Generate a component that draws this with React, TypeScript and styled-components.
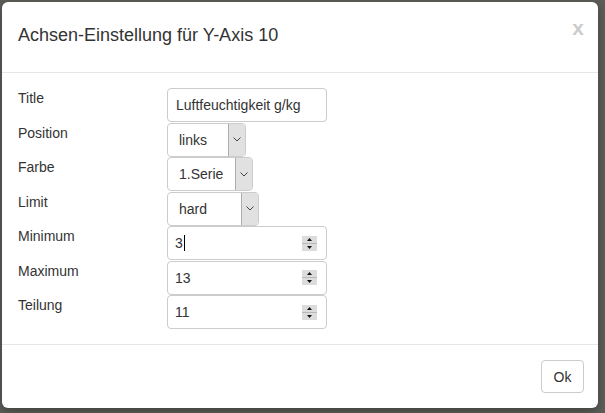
import React from 'react';
import styled, { createGlobalStyle } from 'styled-components';

const GlobalStyle = createGlobalStyle`
  html, body {
    margin: 0;
    padding: 0;
    background: #5c5c58;
  }
  * {
    box-sizing: border-box;
  }
`;

type Field =
  | { label: string; kind: 'text'; value: string }
  | { label: string; kind: 'select'; value: string; width: number }
  | { label: string; kind: 'number'; value: string; caret?: boolean };

const fields: Field[] = [
  { label: 'Title', kind: 'text', value: 'Luftfeuchtigkeit g/kg' },
  { label: 'Position', kind: 'select', value: 'links', width: 79 },
  { label: 'Farbe', kind: 'select', value: '1.Serie', width: 86 },
  { label: 'Limit', kind: 'select', value: 'hard', width: 92 },
  { label: 'Minimum', kind: 'number', value: '3', caret: true },
  { label: 'Maximum', kind: 'number', value: '13' },
  { label: 'Teilung', kind: 'number', value: '11' },
];

const Chevron = () => (
  <svg width="8" height="5" viewBox="0 0 8 5">
    <polyline points="0.5,0.5 4,4 7.5,0.5" fill="none" stroke="#444" strokeWidth="1" />
  </svg>
);

const Spinner = () => (
  <svg width="15" height="15" viewBox="0 0 15 15">
    <rect x="0" y="0" width="15" height="7" fill="#dcdcdc" />
    <rect x="0" y="8" width="15" height="7" fill="#dcdcdc" />
    <rect x="0" y="7" width="15" height="1" fill="#b8b8b8" />
    <polygon points="5,5 10,5 7.5,2" fill="#111" />
    <polygon points="5,10 10,10 7.5,13" fill="#111" />
  </svg>
);

const App: React.FC = () => {
  return (
    <>
      <GlobalStyle />
      <Backdrop>
        <Modal>
          <Header>
            <Heading>Achsen-Einstellung für Y-Axis 10</Heading>
            <Close>x</Close>
          </Header>
          <Body>
            {fields.map((f) => (
              <FormRow key={f.label}>
                <Label>{f.label}</Label>
                {f.kind === 'text' && <TextInput>{f.value}</TextInput>}
                {f.kind === 'select' && (
                  <Select $width={f.width}>
                    <SelectValue>{f.value}</SelectValue>
                    <SelectButton>
                      <Chevron />
                    </SelectButton>
                  </Select>
                )}
                {f.kind === 'number' && (
                  <NumberInput>
                    <span>
                      {f.value}
                      {f.caret && <Caret />}
                    </span>
                    <Spinner />
                  </NumberInput>
                )}
              </FormRow>
            ))}
          </Body>
          <Footer>
            <Button>Ok</Button>
          </Footer>
        </Modal>
      </Backdrop>
    </>
  );
};

const Backdrop = styled.div`
  width: 605px;
  height: 413px;
  padding: 2px 7px 5px 2px;
  background: #5c5c58;
  font-family: 'Liberation Sans', Arial, sans-serif;
  color: #333;
`;

const Modal = styled.div`
  width: 596px;
  height: 406px;
  background: #fff;
  border-radius: 6px;
  display: flex;
  flex-direction: column;
  box-shadow: 0 3px 9px rgba(0, 0, 0, 0.3);
`;

const Header = styled.div`
  height: 71px;
  padding: 21px 14px 0 16px;
  border-bottom: 1px solid #e5e5e5;
  display: flex;
  justify-content: space-between;
  align-items: flex-start;
`;

const Heading = styled.h4`
  margin: 0;
  font-size: 18px;
  font-weight: normal;
  line-height: 25.7px;
  color: #333;
`;

const Close = styled.span`
  font-size: 21px;
  font-weight: bold;
  line-height: 21px;
  color: #000;
  opacity: 0.2;
  margin-top: -6px;
`;

const Body = styled.div`
  flex: 1;
  padding: 15px 16px 0 16px;
  display: grid;
  grid-auto-rows: 34px;
  row-gap: 0.5px;
  align-content: start;
`;

const FormRow = styled.div`
  display: grid;
  grid-template-columns: 149px 1fr;
  align-items: start;
`;

const Label = styled.div`
  font-size: 14px;
  line-height: 20px;
  color: #333;
`;

const Box = styled.div`
  height: 34px;
  border: 1px solid #ccc;
  border-radius: 4px;
  font-size: 14px;
  color: #333;
  display: flex;
  align-items: center;
`;

const TextInput = styled(Box)`
  width: 160px;
  padding-left: 8px;
`;

const Select = styled(Box)<{ $width: number }>`
  width: ${(p) => p.$width}px;
  overflow: hidden;
  justify-content: space-between;
  align-items: stretch;
`;

const SelectValue = styled.span`
  padding-left: 11px;
  display: flex;
  align-items: center;
`;

const SelectButton = styled.span`
  width: 17px;
  background: #e1e1e1;
  border-left: 1px solid #adadad;
  display: flex;
  align-items: center;
  justify-content: center;
`;

const NumberInput = styled(Box)`
  width: 160px;
  padding: 0 9px 0 7px;
  justify-content: space-between;
`;

const Caret = styled.span`
  display: inline-block;
  width: 1px;
  height: 16px;
  margin-left: 1px;
  background: #000;
  vertical-align: -3px;
`;

const Footer = styled.div`
  height: 64px;
  border-top: 1px solid #e5e5e5;
  padding: 15px 14px 0 0;
  display: flex;
  justify-content: flex-end;
  align-items: flex-start;
`;

const Button = styled.button`
  width: 43px;
  height: 33px;
  border: 1px solid #ccc;
  border-radius: 4px;
  background: #fff;
  font-family: 'Liberation Sans', Arial, sans-serif;
  font-size: 14px;
  color: #333;
  padding: 0;
`;

export default App;
